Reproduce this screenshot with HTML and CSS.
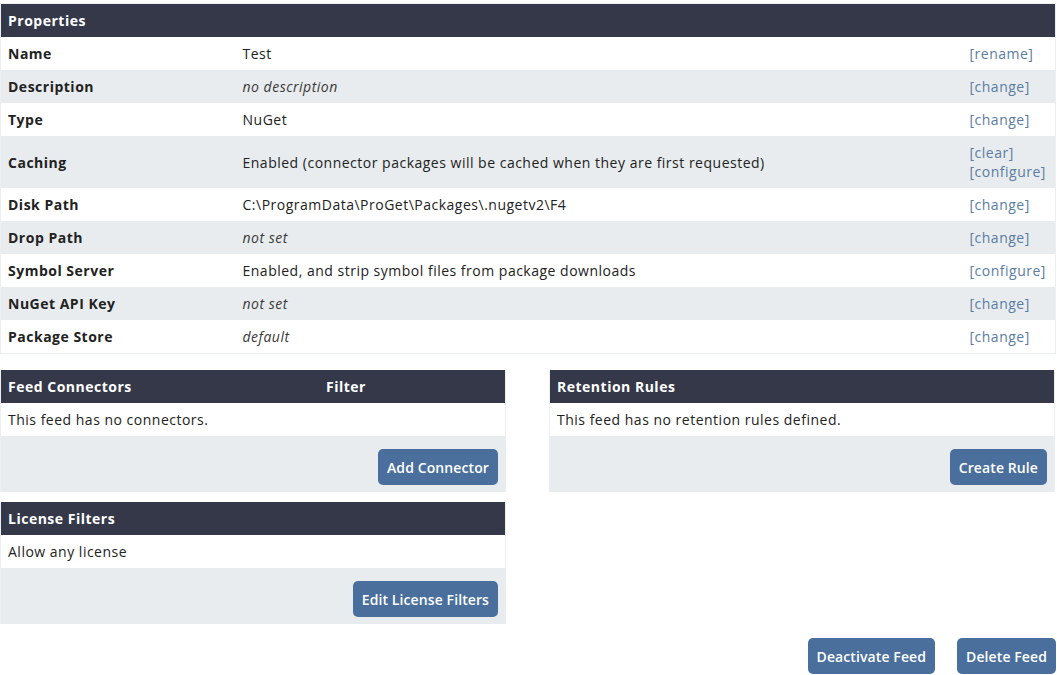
FILE: index.html
```html
<!DOCTYPE html>
<html lang="en">
<head>
    <meta charset="UTF-8">
    <title>Feed Properties</title>
    <link rel="stylesheet" href="styles.css">
</head>
<body>

<div class="page">

    <table class="grid props">
        <tr class="head"><th colspan="3">Properties</th></tr>
        <tr>
            <td class="label">Name</td>
            <td>Test</td>
            <td class="actions"><a href="#">[rename]</a></td>
        </tr>
        <tr class="alt">
            <td class="label">Description</td>
            <td><em>no description</em></td>
            <td class="actions"><a href="#">[change]</a></td>
        </tr>
        <tr>
            <td class="label">Type</td>
            <td>NuGet</td>
            <td class="actions"><a href="#">[change]</a></td>
        </tr>
        <tr class="alt">
            <td class="label">Caching</td>
            <td>Enabled (connector packages will be cached when they are first requested)</td>
            <td class="actions"><a href="#">[clear]</a><br><a href="#">[configure]</a></td>
        </tr>
        <tr>
            <td class="label">Disk Path</td>
            <td>C:\ProgramData\ProGet\Packages\.nugetv2\F4</td>
            <td class="actions"><a href="#">[change]</a></td>
        </tr>
        <tr class="alt">
            <td class="label">Drop Path</td>
            <td><em>not set</em></td>
            <td class="actions"><a href="#">[change]</a></td>
        </tr>
        <tr>
            <td class="label">Symbol Server</td>
            <td>Enabled, and strip symbol files from package downloads</td>
            <td class="actions"><a href="#">[configure]</a></td>
        </tr>
        <tr class="alt">
            <td class="label">NuGet API Key</td>
            <td><em>not set</em></td>
            <td class="actions"><a href="#">[change]</a></td>
        </tr>
        <tr>
            <td class="label">Package Store</td>
            <td><em>default</em></td>
            <td class="actions"><a href="#">[change]</a></td>
        </tr>
    </table>

    <div class="columns">
        <div class="col">
            <div class="panel">
                <div class="panel-head">
                    <span class="head-main">Feed Connectors</span>
                    <span>Filter</span>
                </div>
                <div class="panel-row">This feed has no connectors.</div>
                <div class="panel-foot">
                    <button class="btn">Add Connector</button>
                </div>
            </div>

            <div class="panel">
                <div class="panel-head">License Filters</div>
                <div class="panel-row">Allow any license</div>
                <div class="panel-foot">
                    <button class="btn">Edit License Filters</button>
                </div>
            </div>
        </div>

        <div class="col">
            <div class="panel">
                <div class="panel-head">Retention Rules</div>
                <div class="panel-row">This feed has no retention rules defined.</div>
                <div class="panel-foot">
                    <button class="btn">Create Rule</button>
                </div>
            </div>
        </div>
    </div>

    <div class="bottom-buttons">
        <button class="btn">Deactivate Feed</button>
        <button class="btn">Delete Feed</button>
    </div>

</div>

</body>
</html>
```

FILE: styles.css
```css
* {
    margin: 0;
    padding: 0;
    box-sizing: border-box;
}

body {
    background: white;
    color: #222;
    font-family: "Open Sans", Arial, sans-serif;
    font-size: 14px;
    line-height: 19px;
    letter-spacing: 0.5px;
}

.page {
    width: 1057px;
    padding: 3px 1px 0 0;
}

a {
    color: #5b7ca3;
    text-decoration: none;
}

em {
    color: #3a3a3a;
}

/* properties table */
.grid {
    width: 100%;
    border-collapse: collapse;
    border: 1px solid #eceff1;
}

.grid td,
.grid th {
    padding: 7px 7px;
    text-align: left;
    vertical-align: middle;
}

.grid .head th {
    background: #353849;
    color: white;
    font-weight: bold;
}

.grid tr.alt td {
    background: #e8ecee;
}

.grid .label {
    width: 235px;
    font-weight: bold;
}

.grid .actions {
    width: 93px;
}

/* lower panels */
.columns {
    display: flex;
    gap: 43px;
    margin-top: 16px;
}

.col {
    width: 506px;
    display: flex;
    flex-direction: column;
    gap: 10px;
}

.panel {
    border-left: 1px solid #eceff1;
    border-right: 1px solid #eceff1;
}

.panel-head {
    display: flex;
    background: #353849;
    color: white;
    font-weight: bold;
    padding: 7px 7px;
}

.head-main {
    width: 318px;
}

.panel-row {
    padding: 7px 7px;
    background: white;
}

.panel-foot {
    display: flex;
    justify-content: flex-end;
    background: #e8ecee;
    padding: 13px 7px 7px;
}

.btn {
    background: #4a6f9d;
    color: white;
    border: none;
    border-radius: 5px;
    font-family: inherit;
    font-size: 14px;
    font-weight: 600;
    letter-spacing: 0.1px;
    line-height: 19px;
    padding: 9px 9px 8px;
    cursor: pointer;
}

.bottom-buttons {
    display: flex;
    justify-content: flex-end;
    gap: 22px;
    margin-top: 14px;
}
```
